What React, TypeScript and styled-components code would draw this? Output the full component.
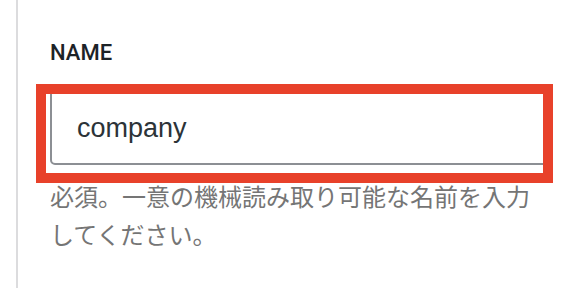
import React from "react";
import styled, {createGlobalStyle} from "styled-components";

const GlobalStyle = createGlobalStyle`
    html, body {
        margin: 0;
        padding: 0;
        background: #ffffff;
    }
    body {
        font-family: "Liberation Sans", Arial, "Noto Sans CJK JP", sans-serif;
    }
`,

    Panel = styled.div`
        box-sizing: border-box;
        margin-left: 16px;
        min-height: 288px;
        border-left: 2px solid #dcdcde;
        padding: 39px 16px 0 32px;
`,

    Label = styled.label`
        display: block;
        font-family: Roboto, "Liberation Sans", sans-serif;
        font-size: 22px;
        line-height: 28px;
        font-weight: 500;
        color: #1d2327;
`,

    Field = styled.div`
        position: relative;
        margin-top: 21px;
`,

    Input = styled.input`
        box-sizing: border-box;
        display: block;
        width: 100%;
        height: 77px;
        margin: 0;
        padding: 4px 0 0 25px;
        border: 2px solid #8c8f94;
        border-radius: 5px;
        background: #ffffff;
        font-family: "Liberation Sans", Arial, sans-serif;
        font-size: 27px;
        color: #2c3338;
        outline: none;
`,

    Highlight = styled.span`
        position: absolute;
        top: -4px;
        left: -14px;
        right: -5px;
        bottom: -18px;
        border: 10px solid #e8412a;
        pointer-events: none;
`,

    Help = styled.p`
        margin: 12px 0 0;
        font-family: "Noto Sans CJK JP", "Noto Sans", sans-serif;
        font-size: 24px;
        line-height: 38px;
        color: #757575;
`;

export default function App () {

    return (
        <>
            <GlobalStyle />
            <Panel>
                <Label htmlFor="name">NAME</Label>
                <Field>
                    <Input id="name" defaultValue="company" readOnly />
                    <Highlight />
                </Field>
                <Help>
                    必須。一意の機械読み取り可能な名前を入力してください。
                </Help>
            </Panel>
        </>
    );

}
